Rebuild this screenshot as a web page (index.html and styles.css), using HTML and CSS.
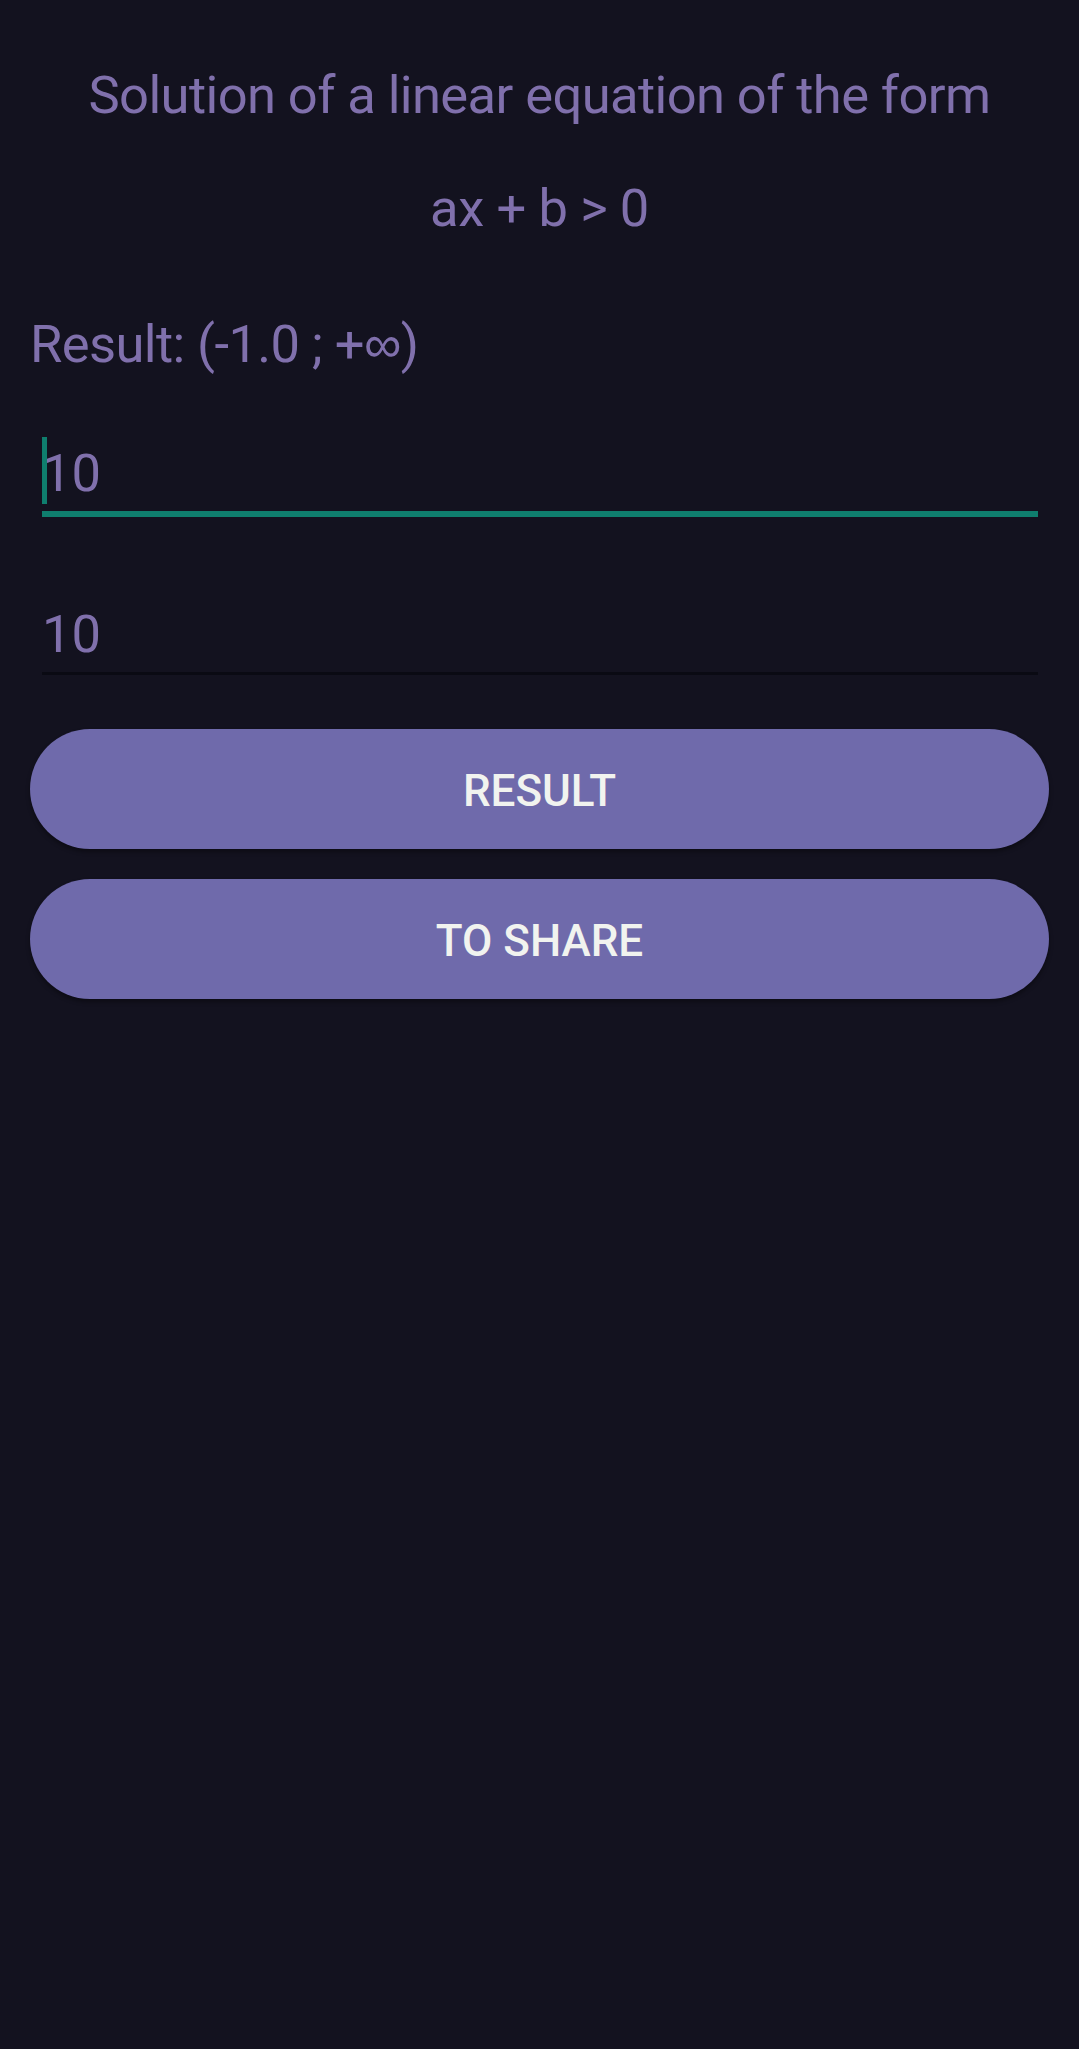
FILE: index.html
```html
<!DOCTYPE html>
<html lang="en">
<head>
<meta charset="utf-8">
<title>Linear inequality</title>
<link rel="stylesheet" href="styles.css">
</head>
<body>
<main class="page">
  <h1 class="title">Solution of a linear equation of the form</h1>
  <p class="formula">ax + b &gt; 0</p>
  <p class="result">Result: (-1.0 ; +<span class="inf">∞</span>)</p>
  <div class="field field-focused">
    <span class="caret"></span>
    <span class="value">10</span>
  </div>
  <div class="field field-idle">
    <span class="value">10</span>
  </div>
  <div class="actions">
    <button class="btn" type="button">RESULT</button>
    <button class="btn" type="button">TO SHARE</button>
  </div>
</main>
</body>
</html>
```

FILE: styles.css
```css
html, body {
  margin: 0;
  padding: 0;
  background: #13121f;
}

body {
  width: 1079px;
  height: 2049px;
  font-family: Roboto, "Noto Sans", "Liberation Sans", sans-serif;
  color: #8070ac;
}

.page {
  display: flex;
  flex-direction: column;
  padding: 65px 30px 0 30px;
}

.title,
.formula,
.result {
  margin: 0;
  font-size: 52.5px;
  font-weight: 400;
  line-height: 61.5px;
  letter-spacing: -0.6px;
}

.title,
.formula {
  text-align: center;
}

.formula {
  margin-top: 51px;
  letter-spacing: -0.4px;
}

.result {
  margin-top: 74px;
}

.inf {
  font-family: "Liberation Sans", sans-serif;
}

.field {
  position: relative;
  margin: 0 11px 0 12px;
  font-size: 52.5px;
  line-height: 61.5px;
  padding-bottom: 6.5px;
}

.field-focused {
  margin-top: 67.5px;
  border-bottom: 6px solid #0f7e6e;
}

.field-idle {
  margin-top: 87px;
  border-bottom: 3px solid #0a0a13;
}

.value {
  color: #8070ac;
}

.caret {
  position: absolute;
  left: 0;
  top: -6px;
  width: 5px;
  height: 67px;
  background: #0f7e6e;
}

.actions {
  display: flex;
  flex-direction: column;
  gap: 30px;
  margin-top: 54px;
}

.btn {
  height: 120px;
  padding: 3px 0 0 0;
  border: none;
  border-radius: 60px;
  background: #6f6aab;
  color: #f1f3ef;
  font-family: Roboto, "Noto Sans", "Liberation Sans", sans-serif;
  font-size: 44px;
  font-weight: 500;
  letter-spacing: 0;
  box-shadow: 0 3px 4px rgba(0, 0, 0, 0.35);
  cursor: pointer;
}
```
